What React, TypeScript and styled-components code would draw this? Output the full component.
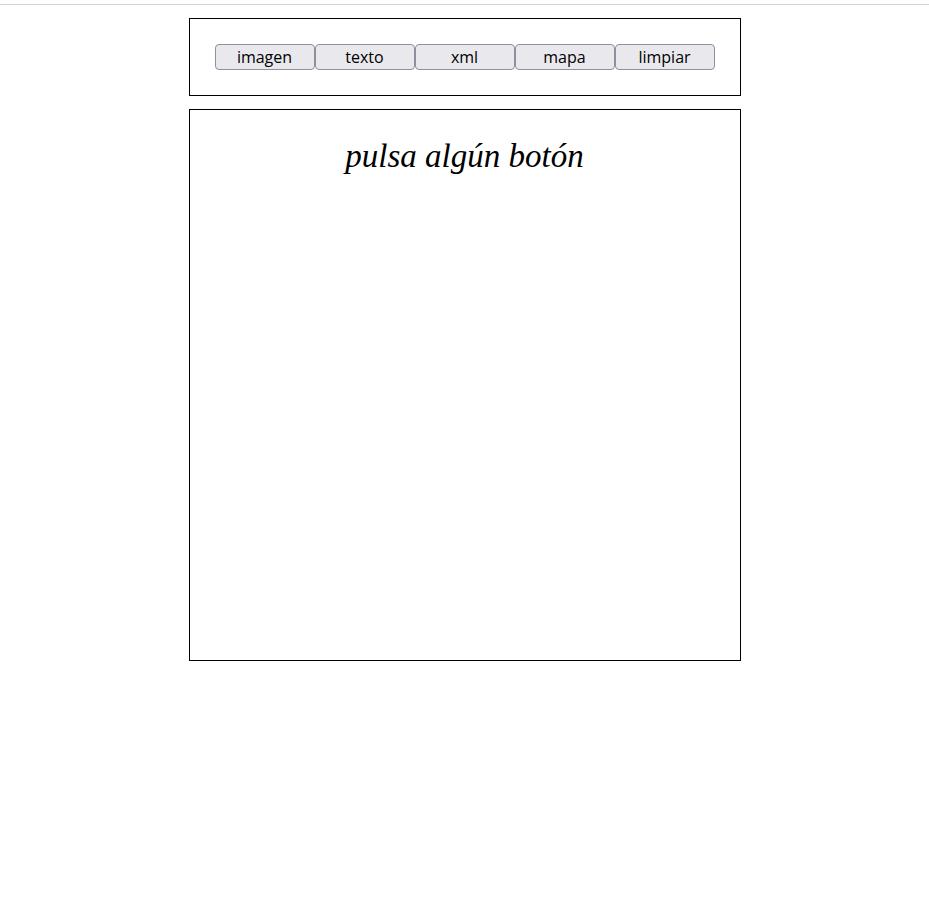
import React from "react";
import styled, { createGlobalStyle } from "styled-components";

const Global = createGlobalStyle`
  html, body { margin: 0; padding: 0; background: #fff; }
  body { font-family: "Open Sans", "DejaVu Sans", sans-serif; }
`;

const TopRule = styled.div`
  margin-top: 4px;
  height: 1px;
  background: #d2d2d2;
`;

const Page = styled.div`
  display: flex;
  flex-direction: column;
  align-items: center;
  padding-top: 13px;
  gap: 13px;
`;

const Toolbar = styled.div`
  width: 500px;
  padding: 25px;
  border: 1px solid #000;
  display: flex;
`;

const Button = styled.button`
  width: 100px;
  height: 26px;
  padding: 0;
  background: #e9e9ed;
  border: 1px solid #8f8f9d;
  border-radius: 4px;
  font-family: "Open Sans", "DejaVu Sans", sans-serif;
  font-size: 16px;
  color: #000;
  line-height: 22px;
`;

const Stage = styled.div`
  width: 550px;
  height: 550px;
  border: 1px solid #000;
  display: flex;
  flex-direction: column;
  align-items: center;
`;

const Title = styled.h1`
  margin: 26px 0 0;
  font-family: "Liberation Serif", "DejaVu Serif", serif;
  font-style: italic;
  font-weight: normal;
  font-size: 33px;
  line-height: 40px;
  color: #000;
`;

const labels = ["imagen", "texto", "xml", "mapa", "limpiar"];

export default function App() {
  return (
    <>
      <Global />
      <TopRule />
      <Page>
        <Toolbar>
          {labels.map((l) => (
            <Button key={l}>{l}</Button>
          ))}
        </Toolbar>
        <Stage>
          <Title>pulsa algún botón</Title>
        </Stage>
      </Page>
    </>
  );
}
